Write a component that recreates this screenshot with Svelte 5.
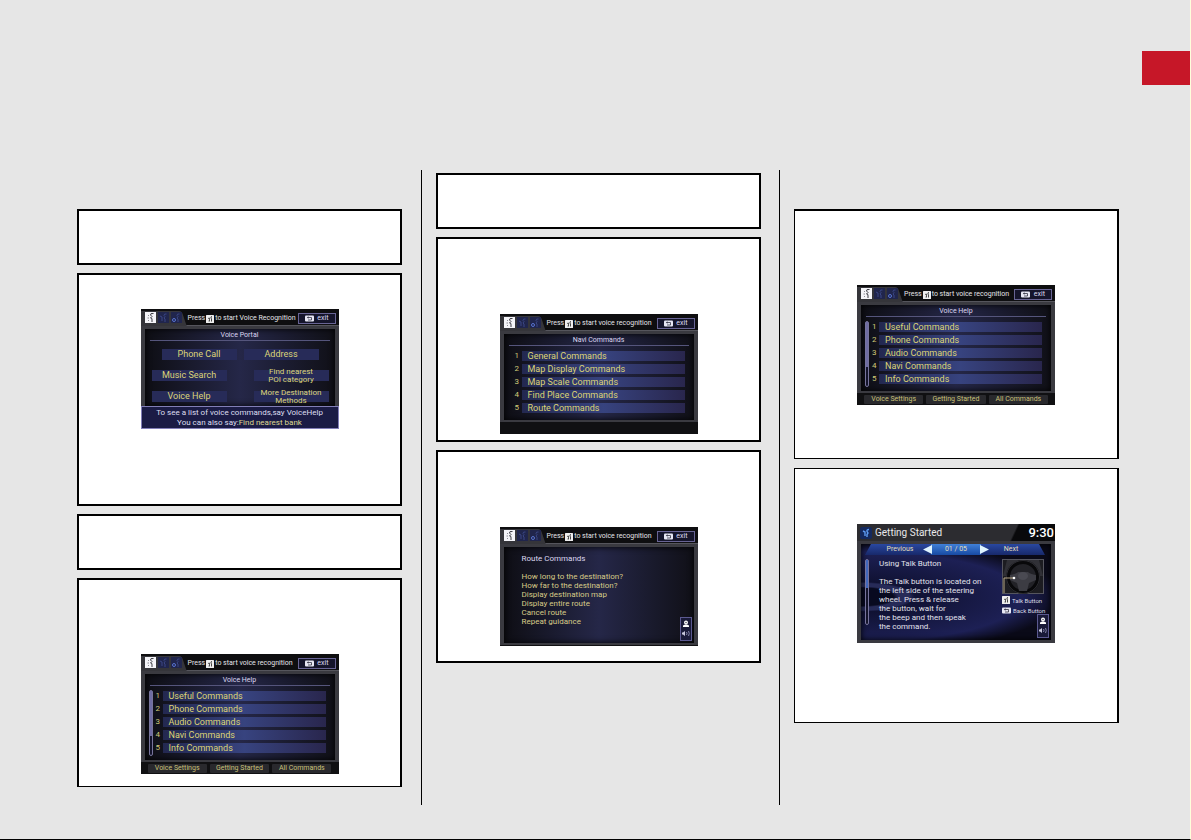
<script>
  const help = {
    kind: 'list', title: 'Voice Help', scroll: true,
    rows: ['Useful Commands', 'Phone Commands', 'Audio Commands', 'Navi Commands', 'Info Commands'],
    footer: ['Voice Settings', 'Getting Started', 'All Commands']
  };
  const navi = {
    kind: 'list', title: 'Navi Commands', scroll: false,
    rows: ['General Commands', 'Map Display Commands', 'Map Scale Commands', 'Find Place Commands', 'Route Commands'],
    footer: []
  };
  const columns = [
    { cls: 'lower', boxes: [
      { pad: [26, 26] },
      { pad: [34, 75], screen: { kind: 'portal' } },
      { pad: [26, 26] },
      { pad: [74, 12], cls: 'thinbottom', screen: help }
    ] },
    { cls: 'upper', boxes: [
      { pad: [26, 26] },
      { pad: [75, 6], screen: navi },
      { pad: [75, 15], screen: { kind: 'route' } }
    ] },
    { cls: 'lower light', boxes: [
      { pad: [74, 53], cls: 'thinbottom', screen: help },
      { pad: [55, 79], cls: 'thinbottom thintop', screen: { kind: 'started' } }
    ] }
  ];
  const portal = ['Phone Call', 'Address', 'Music Search', 'Find nearest\nPOI category', 'Voice Help', 'More Destination\nMethods'];
  const routes = ['How long to the destination?', 'How far to the destination?', 'Display destination map', 'Display entire route', 'Cancel route', 'Repeat guidance'];
  const talk = ['The Talk button is located on', 'the left side of the steering', 'wheel. Press & release', 'the button, wait for', 'the beep and then speak', 'the command.'];
</script>

{#snippet status()}
  <div class="status">
    <svg viewBox="0 0 12 24" width="12" height="24" aria-hidden="true">
      <circle cx="6" cy="5.500" r="2" fill="#fff" /><path d="M3 10V8.500L5 7.500h2l2 1V10z" fill="#fff" /><circle cx="6" cy="5.500" r="0.700" fill="#334" />
      <path d="M2 15.500h1l2-1.500v5l-2-1.500H2z" fill="#c8c8dc" /><path d="M6.500 15q1 1.500 0 3M8.500 14q1.500 2.500 0 5" fill="none" stroke="#9090b4" stroke-width="0.900" />
    </svg>
  </div>
{/snippet}

{#snippet talkIcon()}
  <svg class="glyph" viewBox="0 0 8 8" width="8" height="8" aria-hidden="true">
    <rect width="8" height="8" rx="0.500" fill="#eee" /><path d="M2 3.500L3.500 3v3M2.500 6H4" fill="none" stroke="#333" stroke-width="0.800" /><path d="M6 1.500q-1.500 0-1 1.500L5.500 4v2.500" fill="none" stroke="#333" stroke-width="0.900" />
  </svg>
{/snippet}

{#snippet backIcon()}
  <svg class="glyph" viewBox="0 0 9 7" width="9" height="7" aria-hidden="true">
    <rect y="0.500" width="9" height="6" rx="1" fill="#e8e8f4" /><path d="M3 2.500h3.500V5H3" fill="none" stroke="#334" stroke-width="0.800" /><path d="M3.500 1.300v2.400L1.800 2.500z" fill="#334" />
  </svg>
{/snippet}

{#snippet topbar(label)}
  <header class="topbar">
    <svg class="tabs" viewBox="0 0 47 20" width="47" height="20" aria-hidden="true">
      <path d="M0 2h38q3 0 4 4l3 9q1 3 2 5H0z" fill="#35353a" />
      <rect x="4" y="3" width="11" height="11" fill="#f4f4f8" />
      <rect x="17" y="3" width="11" height="11" fill="#20254c" /><rect x="30" y="3" width="11" height="11" fill="#20254c" />
      <path d="M12.500 4.500Q9 4 9.500 6L11 7.500 9.500 9q2 0 1.500 2v2" fill="none" stroke="#3a3a42" stroke-width="1" />
      <path d="M7 6l1 1M6.500 9h1.500M8 11l-1 1" stroke="#70707a" stroke-width="0.800" />
      <path d="M25.500 5Q23 4.500 23 6.500l1 1-1 1.500 1 1v3M19 7l2 1v4M38.500 5Q36 4.500 36 6.500l1 1-1 1.500 1 1v3" fill="none" stroke="#3a4684" stroke-width="1" />
      <circle cx="33" cy="11" r="1.500" fill="none" stroke="#5c7bdc" stroke-width="0.900" />
    </svg>
    <span class="press">Press {@render talkIcon()} {label}</span>
    <button class="exit">{@render backIcon()}<span>exit</span></button>
  </header>
{/snippet}

<main class="page">
  <div class="masthead"><div class="thumb"></div></div>
  <div class="columns">
    {#each columns as col, c}
      {#if c > 0}<div class="rule"></div>{/if}
      <section class="column {col.cls}">
        {#each col.boxes as box}
          <article class="box {box.cls ?? ''}" style:padding-top="{box.pad[0]}px" style:padding-bottom="{box.pad[1]}px">
            {#if box.screen}
              {@const s = box.screen}
              <div class="screen {s.kind}">
                {#if s.kind === 'portal'}
                  {@render topbar('to start Voice Recognition')}
                  <div class="panel">
                    <h3>Voice Portal</h3>
                    <div class="choices">
                      {#each portal as p}<button class:double={p.includes('\n')}>{p}</button>{/each}
                    </div>
                  </div>
                  <p class="hint">To see a list of voice commands,say VoiceHelp<br />You can also say:<em>Find nearest bank</em></p>
                {:else if s.kind === 'list'}
                  {@render topbar('to start voice recognition')}
                  <div class="panel">
                    <h3>{s.title}</h3>
                    <div class="listing">
                      <div class="track" class:hidden={!s.scroll}><div class="knob"></div></div>
                      <ol>
                        {#each s.rows as r, i}<li><span>{i + 1}</span><button>{r}</button></li>{/each}
                      </ol>
                    </div>
                  </div>
                  <footer>{#each s.footer as f}<button>{f}</button>{/each}</footer>
                {:else if s.kind === 'route'}
                  {@render topbar('to start voice recognition')}
                  <div class="panel">
                    <h3>Route Commands</h3>
                    <ul>{#each routes as r}<li>{r}</li>{/each}</ul>
                    {@render status()}
                  </div>
                {:else}
                  <header class="titlebar">
                    <svg viewBox="0 0 12 12" width="12" height="12" aria-hidden="true">
                      <rect width="12" height="12" rx="2" fill="#14295e" /><path d="M3 4l2 1v4M9 2.500Q6.500 2.500 7 4.500L8 6 7 7.500V10" fill="none" stroke="#5c9af0" stroke-width="1.400" />
                    </svg>
                    <h3>Getting Started</h3><time>9:30</time>
                  </header>
                  <div class="panel">
                    <nav>
                      <button class="prev">Previous</button>
                      <span class="count">01 / 05</span>
                      <button class="next">Next</button>
                      <svg class="arrows" viewBox="0 0 66 11" width="66" height="11" aria-hidden="true">
                        <path d="M0 5.500L9 1v9zM66 5.500L57 1v9z" fill="#dff4ff" />
                      </svg>
                    </nav>
                    <div class="lesson">
                      <div class="track"><div class="knob"></div></div>
                      <div class="copy">
                        <h4>Using Talk Button</h4>
                        <p>{#each talk as t}{t}<br />{/each}</p>
                      </div>
                      <aside>
                        <svg viewBox="0 0 42 35" width="42" height="35" aria-hidden="true">
                          <rect x="0.500" y="0.500" width="41" height="34" fill="#1c1c21" stroke="#55555e" />
                          <path d="M5 1h32l4 16H1z" fill="#303036" />
                          <circle cx="21" cy="18" r="15" fill="#222227" stroke="#08080a" stroke-width="4" />
                          <circle cx="21" cy="18" r="16.500" fill="none" stroke="#505058" stroke-width="0.500" />
                          <path d="M8 16q6-1 8-3h10q2 2 8 3v5l-7 3-2 8h-8l-2-8-7-3z" fill="#3c3c43" />
                          <ellipse cx="21" cy="17" rx="5" ry="4" fill="#4a4a52" />
                          <path d="M2 34V19h10" fill="none" stroke="#b8a888" /><circle cx="12" cy="19" r="1.300" fill="#fff" />
                        </svg>
                        <div class="legend">{@render talkIcon()}<span>Talk Button</span></div>
                        <div class="legend">{@render backIcon()}<span>Back Button</span></div>
                      </aside>
                    </div>
                    {@render status()}
                  </div>
                {/if}
              </div>
            {/if}
          </article>
        {/each}
      </section>
    {/each}
  </div>
</main>

<style>
  :global(body) { background: #e6e6e6; }
  * { box-sizing: border-box; }
  .page { min-height: 100vh; background: #e6e6e6; border-right: 1px solid #ffffdc; border-bottom: 1px solid #000; font-family: Roboto, "Liberation Sans", sans-serif; }
  .masthead { height: 170px; padding-top: 51px; display: flex; justify-content: flex-end; }
  .thumb { width: 48px; height: 34px; background: #c61728; }
  .columns { display: grid; grid-template-columns: 1fr 34px 1fr 33px 1fr; min-height: 635px; padding: 0 71px 0 77px; }
  .rule { margin-right: 14px; border-right: 1px solid #000; }
  .column { display: flex; flex-direction: column; gap: 8px; min-width: 0; }
  .lower { padding-top: 39px; }
  .upper { padding-top: 3px; }
  .light { gap: 9px; }
  .box { display: flex; justify-content: center; background: #fff; border: 2px solid #000; }
  .thinbottom { border-bottom-width: 1px; }
  .thintop { border-top-width: 1px; }
  .light .box { border-left-width: 1px; }

  button { margin: 0; padding: 0; border: 0; font-family: inherit; }
  h3, h4, p, ol, ul { margin: 0; padding: 0; list-style: none; font-weight: 400; font-size: inherit; }
  .screen { position: relative; width: 198px; height: 120px; flex: none; display: flex; flex-direction: column; background: #111113; overflow: hidden; color: #dddde6; font-size: 7px; line-height: 9px; white-space: nowrap; }
  .route, .started { height: 119px; }
  .topbar { display: flex; height: 17px; align-items: center; border-bottom: 1px solid #55555c; background: #0e0e10; flex: none; }
  .tabs { flex: none; align-self: flex-start; }
  .press { flex: 1; display: flex; align-items: center; gap: 1px; padding-top: 3px; color: #e4e4e8; }
  .glyph { flex: none; }
  .exit { display: flex; align-items: center; justify-content: space-between; width: 38px; height: 11px; margin-right: 3px; margin-top: 2px; padding: 0 6px; border: 1px solid #686494; background: #15152b; color: #dcdcf0; font-size: 7px; line-height: 8px; }
  .panel { display: flex; flex-direction: column; flex: 1; border: solid #3a3a40; border-width: 3px 4px 2px; padding: 2px 5px 0; background: linear-gradient(90deg, #0e0e14, #252748 50%, #101017); box-shadow: inset 0 0 6px #000; min-height: 0; position: relative; }
  .panel > h3 { text-align: center; height: 10px; border-bottom: 1px solid #55557c; color: #dcd6f0; }
  .listing { display: flex; padding-top: 4px; }
  .track { width: 4px; height: 66px; margin-left: -1px; border: 1px solid #77749c; border-radius: 2px; background: #14142b; flex: none; }
  .knob { height: 45px; background: #6e6ca2; }
  .hidden { visibility: hidden; }
  ol { flex: 1; display: flex; flex-direction: column; gap: 3px; padding: 1px 0 0 3px; }
  li { display: flex; }
  ol span { width: 7px; color: #d0ca78; font-size: 8px; line-height: 10px; }
  ol button { width: 163px; height: 10px; padding-left: 6px; text-align: left; color: #ddd575; background: linear-gradient(90deg, #232850, #37437f 50%, #29264d); font-size: 9px; line-height: 10px; }
  .list .panel { flex: none; height: 91px; }
  .list footer { display: grid; grid-template-columns: repeat(3, 1fr); gap: 3px; padding: 2px 7px 1px; height: 12px; background: #101012; }
  footer button { background: #29292d; border-radius: 1px; color: #c9c178; font-size: 7px; line-height: 9px; }
  .portal .panel { flex: none; height: 80px; border-bottom: 0; }
  .choices { display: grid; grid-template-columns: 75px 75px; justify-content: space-between; row-gap: 10px; padding: 8px 1px 0 2px; }
  .choices button { height: 11px; display: flex; align-items: center; justify-content: center; background: #272b58; color: #dcd478; font-size: 9px; line-height: 9px; }
  .choices button:nth-child(1) { margin: 0 -10px 0 10px; }
  .choices button:nth-child(2) { margin: 0 10px 0 -10px; }
  .choices .double { white-space: pre; font-size: 8px; line-height: 8px; }
  .hint { flex: 1; position: relative; border: 1px solid #817eb7; background: #1b1c45; color: #dedef0; text-align: center; font-size: 8px; line-height: 10px; padding-top: 1px; }
  .hint em { font-style: normal; color: #ded993; }
  .route .panel { padding: 7px 18px 0; margin-bottom: 1px; }
  .route .panel > h3 { text-align: left; border: 0; height: 18px; font-size: 8px; line-height: 9px; }
  .route li { color: #d7cb88; font-size: 8px; line-height: 9px; }
  .status { position: absolute; right: 2px; bottom: 2px; width: 12px; height: 24px; box-shadow: inset 0 0 0 1px #5b5990; background: #191a38; }
  .status svg { display: block; }
  .titlebar { display: flex; align-items: center; height: 17px; padding: 0 1px 0 3px; gap: 3px; background: linear-gradient(115deg, #2c2c30 0 78%, #09090b 79%); flex: none; }
  .titlebar h3 { flex: 1; font-size: 10px; line-height: 16px; color: #e8e8ea; }
  .titlebar time { font-size: 13px; line-height: 17px; color: #fff; font-weight: 500; }
  .started .panel { padding: 0; border-bottom-width: 3px; background: radial-gradient(ellipse at 0 55%, #080a20 0 12%, #272b58 14% 18%, #101233 20%, #1d2055 60%, #0a0a18 75%); }
  nav { display: grid; grid-template-columns: 70px 50px 1fr; height: 11px; position: relative; color: #e3dfbc; text-align: center; }
  nav button { color: inherit; background: linear-gradient(#2948a0, #18296b); font-size: 7px; line-height: 11px; }
  .prev { padding-left: 8px; clip-path: polygon(10px 0, 100% 0, 100% 100%, 4px 100%); }
  .next { padding-right: 10px; clip-path: polygon(0 0, 58px 0, 64px 100%, 0 100%); }
  .count { background: linear-gradient(#4080d8, #174aa3); line-height: 11px; }
  .arrows { position: absolute; left: 62px; top: 0; }
  .lesson { display: flex; padding: 4px 5px 0; }
  .lesson .knob { height: 28px; background: #4268bd; }
  .copy { padding-left: 10px; flex: 1; font-size: 8px; line-height: 9px; color: #e2e2ec; }
  .copy h4 { height: 18px; }
  aside { width: 44px; flex: none; font-size: 6px; }
  aside > svg { display: block; margin-bottom: 1px; }
  .legend { display: flex; align-items: center; gap: 2px; height: 10px; }
</style>
